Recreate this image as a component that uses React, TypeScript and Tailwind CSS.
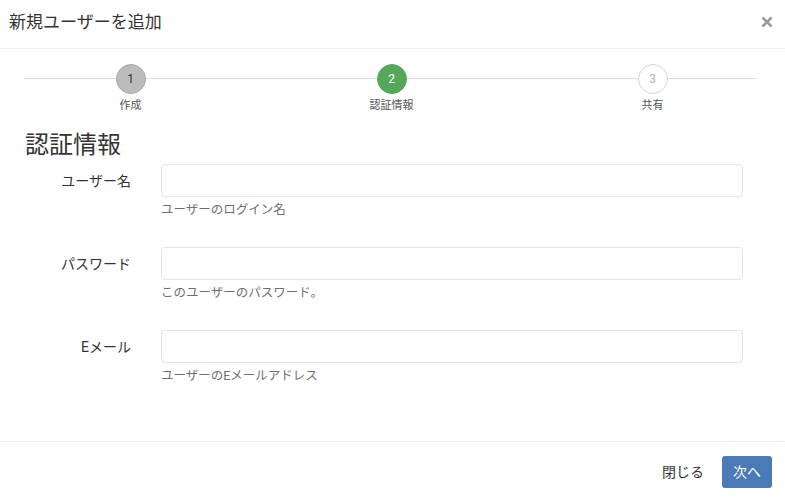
import React from "react";

const font = { fontFamily: '"Helvetica Neue", Roboto, "Noto Sans CJK JP", sans-serif' };

function Step({ n, label, state }: { n: number; label: string; state: "done" | "active" | "todo" }) {
  const circle =
    state === "done"
      ? "bg-[#bcbcbc] border-[#a8a8a8] text-[#333]"
      : state === "active"
      ? "bg-[#55a85a] border-[#55a85a] text-white"
      : "bg-white border-[#d6d6d6] text-[#b5b5b5]";
  return (
    <div className="flex flex-col items-center">
      <div className={`w-[30px] h-[30px] rounded-full border flex items-center justify-center text-[12px] ${circle}`}>{n}</div>
      <div className="mt-[4px] text-[11px] text-[#555] leading-[16px]">{label}</div>
    </div>
  );
}

function Field({ label, help }: { label: string; help: string }) {
  return (
    <div className="flex h-[83px]">
      <div className="w-[131px] shrink-0 text-right text-[14px] text-[#333] pt-[7px] leading-[20px]">{label}</div>
      <div className="ml-[30px] w-[582px]">
        <div className="h-[33px] rounded-[4px] border border-[#e4e4e4] bg-white"></div>
        <div className="mt-[4px] text-[12.5px] text-[#6f6f6f] leading-[18px]">{help}</div>
      </div>
    </div>
  );
}

export default function App() {
  return (
    <div className="w-[785px] h-[500px] bg-white flex flex-col text-[#333]" style={font}>
      <div className="h-[49px] border-b border-[#eeeeee] flex items-center justify-between pl-[9px] pr-[12px] shrink-0">
        <div className="text-[17px] text-[#333] leading-[24px] -mt-[4px]">新規ユーザーを追加</div>
        <svg width="12" height="12" viewBox="0 0 12 12" className="-mt-[5px]">
          <path d="M1.5 1.5 L10.5 10.5 M10.5 1.5 L1.5 10.5" stroke="#9a9a9a" strokeWidth="2.6" strokeLinecap="butt" />
        </svg>
      </div>
      <div className="relative mt-[15px] w-[783px]">
        <div className="absolute left-[24px] right-[26px] top-[14px] h-px bg-[#dcdcdc]"></div>
        <div className="relative grid grid-cols-3">
          <Step n={1} label="作成" state="done" />
          <Step n={2} label="認証情報" state="active" />
          <Step n={3} label="共有" state="todo" />
        </div>
      </div>
      <div className="pl-[25px] mt-[14px] text-[24px] leading-[34px] text-[#333]">認証情報</div>
      <div className="mt-[2px]">
        <Field label="ユーザー名" help="ユーザーのログイン名" />
        <Field label="パスワード" help="このユーザーのパスワード。" />
        <Field label="Eメール" help="ユーザーのEメールアドレス" />
      </div>
      <div className="flex-1"></div>
      <div className="h-[59px] border-t border-[#eeeeee] flex items-center justify-end pr-[13px] shrink-0">
        <div className="text-[14px] text-[#333] mr-[18px] mt-[2px]">閉じる</div>
        <div className="w-[50px] h-[32px] rounded-[3px] bg-[#4a7bb7] text-white text-[14px] flex items-center justify-center mt-[2px]">次へ</div>
      </div>
    </div>
  );
}
